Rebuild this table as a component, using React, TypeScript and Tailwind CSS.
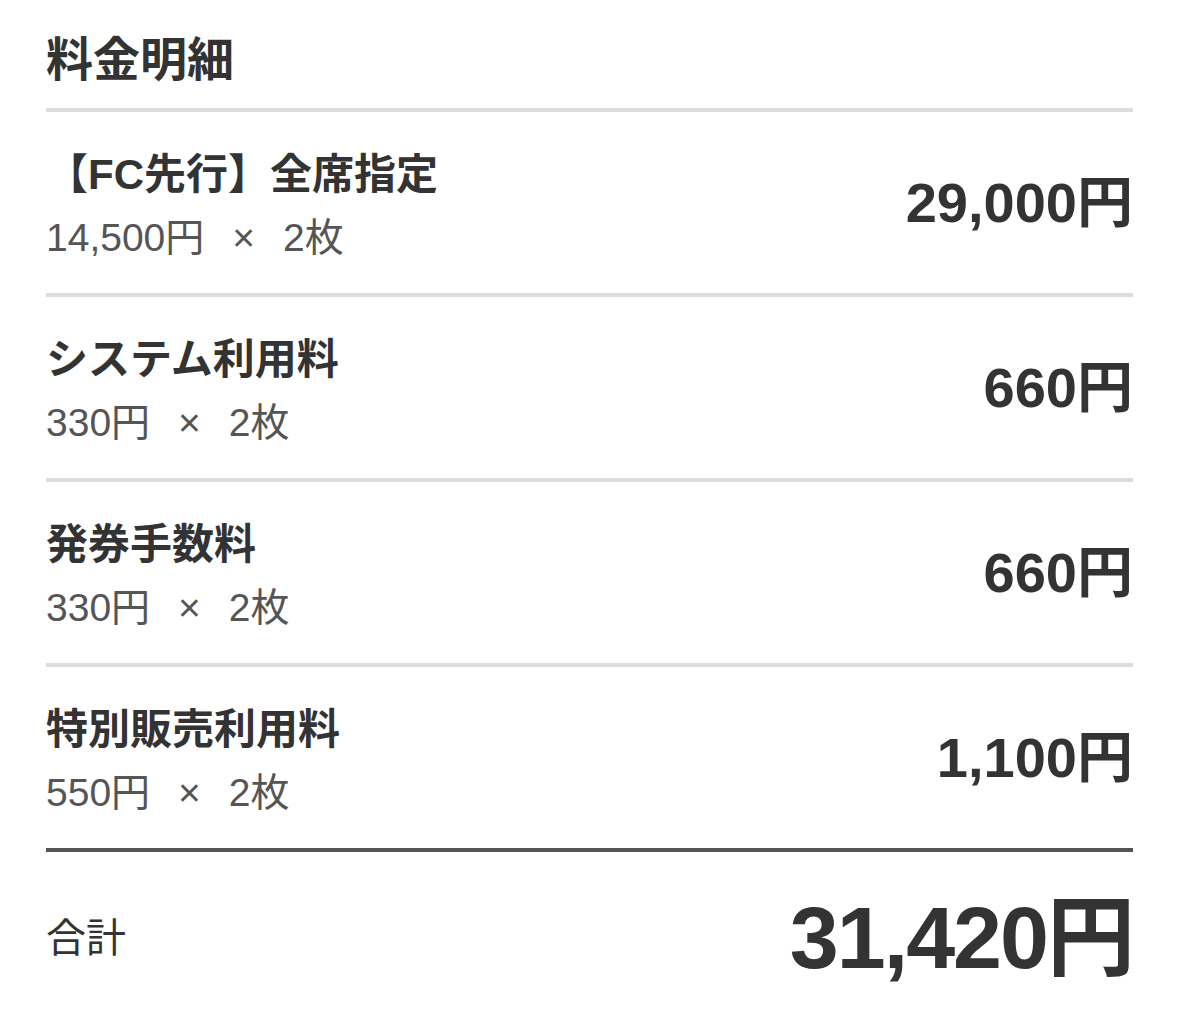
const rows = [
  { name: "【FC先行】全席指定", unit: "14,500円", qty: "2枚", amount: "29,000円" },
  { name: "システム利用料", unit: "330円", qty: "2枚", amount: "660円" },
  { name: "発券手数料", unit: "330円", qty: "2枚", amount: "660円" },
  { name: "特別販売利用料", unit: "550円", qty: "2枚", amount: "1,100円" },
];

const font = { fontFamily: '"Liberation Sans", "Noto Sans CJK JP", sans-serif' };

function FeeRow({ name, unit, qty, amount }: (typeof rows)[number]) {
  return (
    <div className="flex items-center justify-between border-t-4 border-[#dddddd] pt-[28px] pb-[27px]">
      <div>
        <div className="text-[42px] leading-[70px] font-bold text-[#333333]">{name}</div>
        <div className="h-[56px] text-[39px] leading-[56px] text-[#555555]">
          {unit}
          <span className="mx-[28px] leading-none">×</span>
          {qty}
        </div>
      </div>
      <div className="text-[56px] leading-none font-bold text-[#333333]">{amount}</div>
    </div>
  );
}

export default function App() {
  return (
    <main className="min-h-screen bg-white pl-[46px] pr-[45px] pt-[25px]" style={font}>
      <h1 className="text-[47px] leading-[69px] font-bold text-[#333333] mb-[14px]">料金明細</h1>
      {rows.map((r) => (
        <FeeRow key={r.name} {...r} />
      ))}
      <div className="flex items-center justify-between border-t-4 border-[#555555] h-[176px]">
        <div className="text-[40px] text-[#333333]">合計</div>
        <div className="text-[88px] leading-none font-bold tracking-[-2px] text-[#333333]">31,420円</div>
      </div>
    </main>
  );
}
